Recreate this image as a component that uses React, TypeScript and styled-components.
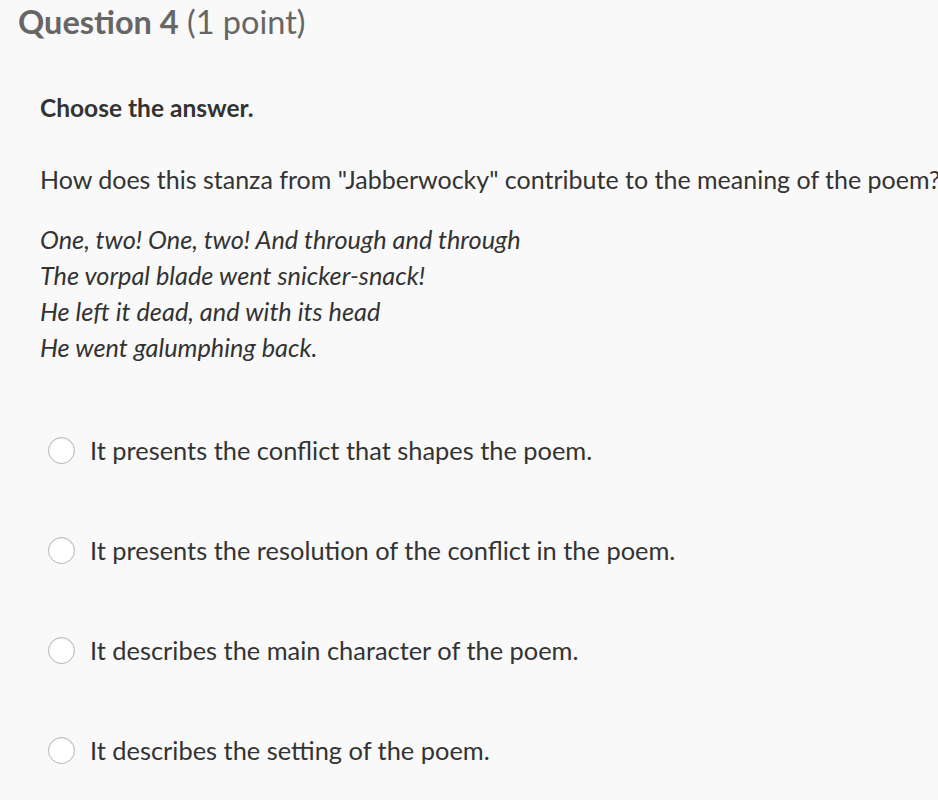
import styled, { createGlobalStyle } from "styled-components";

const GlobalStyle = createGlobalStyle`
  html, body {
    margin: 0;
    padding: 0;
    background: #f9f9f9;
    font-family: Lato, "Open Sans", sans-serif;
    overflow: hidden;
  }
`;

const Page = styled.div`
  width: 938px;
  height: 800px;
  overflow: hidden;
  padding: 4px 0 0 18px;
  box-sizing: border-box;
`;

const Title = styled.h2`
  margin: 0;
  font-size: 32.5px;
  font-weight: 400;
  color: #666;
  white-space: nowrap;
  line-height: 36px;

  strong {
    font-weight: 700;
  }
`;

const Body = styled.div`
  padding: 53px 0 0 22px;
`;

const Instruction = styled.p`
  margin: 0;
  font-size: 24.5px;
  font-weight: 700;
  color: #333;
  line-height: 30px;
`;

const Prompt = styled.p`
  margin: 41px 0 0;
  font-size: 25px;
  color: #333;
  white-space: nowrap;
  line-height: 30px;
`;

const Stanza = styled.div`
  margin-top: 27px;
  font-size: 25.3px;
  font-style: italic;
  color: #333;
  line-height: 36px;
`;

const Options = styled.ul`
  list-style: none;
  margin: 35px 0 0;
  padding: 0;
`;

const Option = styled.li`
  display: flex;
  align-items: center;
  gap: 15px;
  height: 100px;
  margin-left: 8px;
  font-size: 25.4px;
  color: #333;
`;

const Radio = styled.span`
  width: 25px;
  height: 25px;
  border-radius: 50%;
  background: #fff;
  border: 1px solid #b5b5b5;
  box-shadow: inset 0 1px 2px rgba(0, 0, 0, 0.08);
  flex-shrink: 0;
`;

const answers = [
  "It presents the conflict that shapes the poem.",
  "It presents the resolution of the conflict in the poem.",
  "It describes the main character of the poem.",
  "It describes the setting of the poem.",
];

export default function App() {
  return (
    <Page>
      <GlobalStyle />
      <Title>
        <strong>Question 4</strong> (1 point)
      </Title>
      <Body>
        <Instruction>Choose the answer.</Instruction>
        <Prompt>How does this stanza from "Jabberwocky" contribute to the meaning of the poem?</Prompt>
        <Stanza>
          One, two! One, two! And through and through
          <br />
          The vorpal blade went snicker-snack!
          <br />
          He left it dead, and with its head
          <br />
          He went galumphing back.
        </Stanza>
        <Options>
          {answers.map((a) => (
            <Option key={a}>
              <Radio />
              {a}
            </Option>
          ))}
        </Options>
      </Body>
    </Page>
  );
}
